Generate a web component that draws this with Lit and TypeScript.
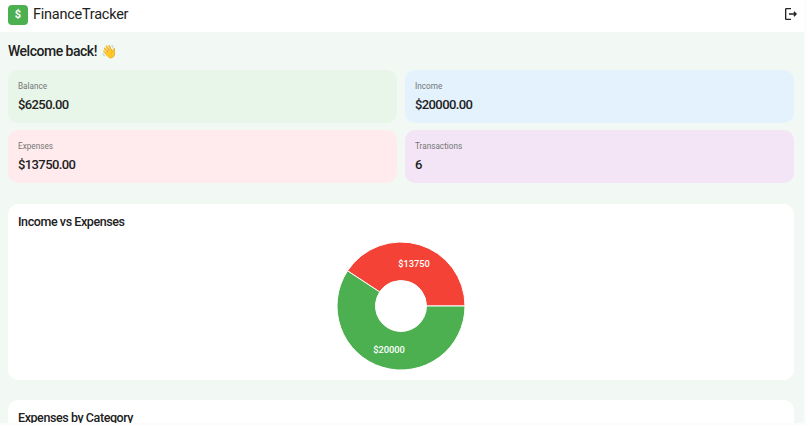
import { LitElement, html, css } from "lit";
import { customElement } from "lit/decorators.js";

const polar = (r: number, deg: number) => {
  const a = (deg * Math.PI) / 180;
  return `${(64 + 1 + r * Math.cos(a)).toFixed(2)} ${(64 + 1 - r * Math.sin(a)).toFixed(2)}`;
};
const slice = (from: number, to: number) => {
  const large = to - from > 180 ? 1 : 0;
  return `M${polar(64, from)} A64 64 0 ${large} 0 ${polar(64, to)} L${polar(25.5, to)} A25.5 25.5 0 ${large} 1 ${polar(25.5, from)} Z`;
};

@customElement("app-root")
export class AppRoot extends LitElement {
  static styles = css`
    :host {
      display: block;
      height: 425px;
      overflow: hidden;
      background: #fbfcfb;
      font-family: Roboto, "Liberation Sans", sans-serif;
      color: #212121;
    }
    .page {
      width: 804px;
      height: 423px;
      overflow: hidden;
      background: #f2f8f4;
      border-bottom-right-radius: 4px;
    }
    header {
      height: 32px;
      background: #fff;
      display: flex;
      align-items: center;
      padding: 0 8px;
      box-sizing: border-box;
    }
    .logo {
      width: 20px;
      height: 20px;
      border-radius: 4px;
      background: #4caf50;
      color: #fff;
      font-size: 11px;
      font-weight: 700;
      display: flex;
      align-items: center;
      justify-content: center;
      margin-right: 5px;
      margin-top: -3px;
    }
    .brand { font-size: 14.5px; letter-spacing: -0.25px; flex: 1; margin-top: -4px; }
    .exit { width: 16px; height: 16px; display: block; margin: -4px -3px 0 0; }
    main { padding: 10px 10px 0 8px; }
    h1 {
      margin: 0 0 9px;
      font-size: 14px;
      line-height: 19px;
      font-weight: 500;
      letter-spacing: -0.5px;
    }
    .wave { font-size: 13px; letter-spacing: 0; margin-left: 1px; }
    .stats {
      display: grid;
      grid-template-columns: 1fr 1fr;
      gap: 7px 8px;
    }
    .stat {
      height: 53px;
      box-sizing: border-box;
      border-radius: 10px;
      padding: 11px 10px 0;
    }
    .stat .label { font-size: 8.2px; line-height: 11px; color: #757575; }
    .stat .value { font-size: 13px; line-height: 17px; margin-top: 4px; letter-spacing: -0.6px; font-weight: 500; }
    .green { background: #e8f5e9; }
    .blue { background: #e3f2fd; }
    .red { background: #ffebee; }
    .purple { background: #f3e5f5; }
    .card {
      background: #fff;
      border-radius: 10px;
      padding: 10px;
      box-sizing: border-box;
    }
    .chart { height: 176px; margin-top: 21px; }
    .next { margin-top: 20px; height: 80px; }
    h2 {
      margin: 0;
      font-size: 12.5px;
      line-height: 16px;
      font-weight: 500;
      letter-spacing: -0.42px;
    }
    .pie { display: block; margin: 11px auto 0; }
    .pie text {
      fill: #fff;
      font-size: 9.3px;
      font-weight: 500;
      text-anchor: middle;
      font-family: Roboto, "Liberation Sans", sans-serif;
    }
  `;

  private stats = [
    ["Balance", "$6250.00", "green"],
    ["Income", "$20000.00", "blue"],
    ["Expenses", "$13750.00", "red"],
    ["Transactions", "6", "purple"],
  ];

  render() {
    const split = (13750 / 33750) * 360;
    return html`
      <div class="page">
        <header>
          <div class="logo">$</div>
          <div class="brand">FinanceTracker</div>
          <svg class="exit" viewBox="0 0 24 24" fill="#212121">
            <path d="M17 8l-1.41 1.41L17.17 11H9v2h8.17l-1.58 1.58L17 16l4-4-4-4zM5 5h7V3H5c-1.1 0-2 .9-2 2v14c0 1.1.9 2 2 2h7v-2H5V5z" />
          </svg>
        </header>
        <main>
          <h1>Welcome back! <span class="wave">👋</span></h1>
          <section class="stats">
            ${this.stats.map(
              ([label, value, tone]) => html`
                <div class="stat ${tone}">
                  <div class="label">${label}</div>
                  <div class="value">${value}</div>
                </div>
              `
            )}
          </section>
          <section class="card chart">
            <h2>Income vs Expenses</h2>
            <svg class="pie" width="130" height="130" viewBox="0 0 130 130">
              <path d=${slice(0, split)} fill="#f44336" stroke="#fff" stroke-width="1" />
              <path d=${slice(split, 360)} fill="#4caf50" stroke="#fff" stroke-width="1" />
              <text x="78" y="26">$13750</text>
              <text x="53" y="112">$20000</text>
            </svg>
          </section>
          <section class="card next">
            <h2>Expenses by Category</h2>
          </section>
        </main>
      </div>
    `;
  }
}
